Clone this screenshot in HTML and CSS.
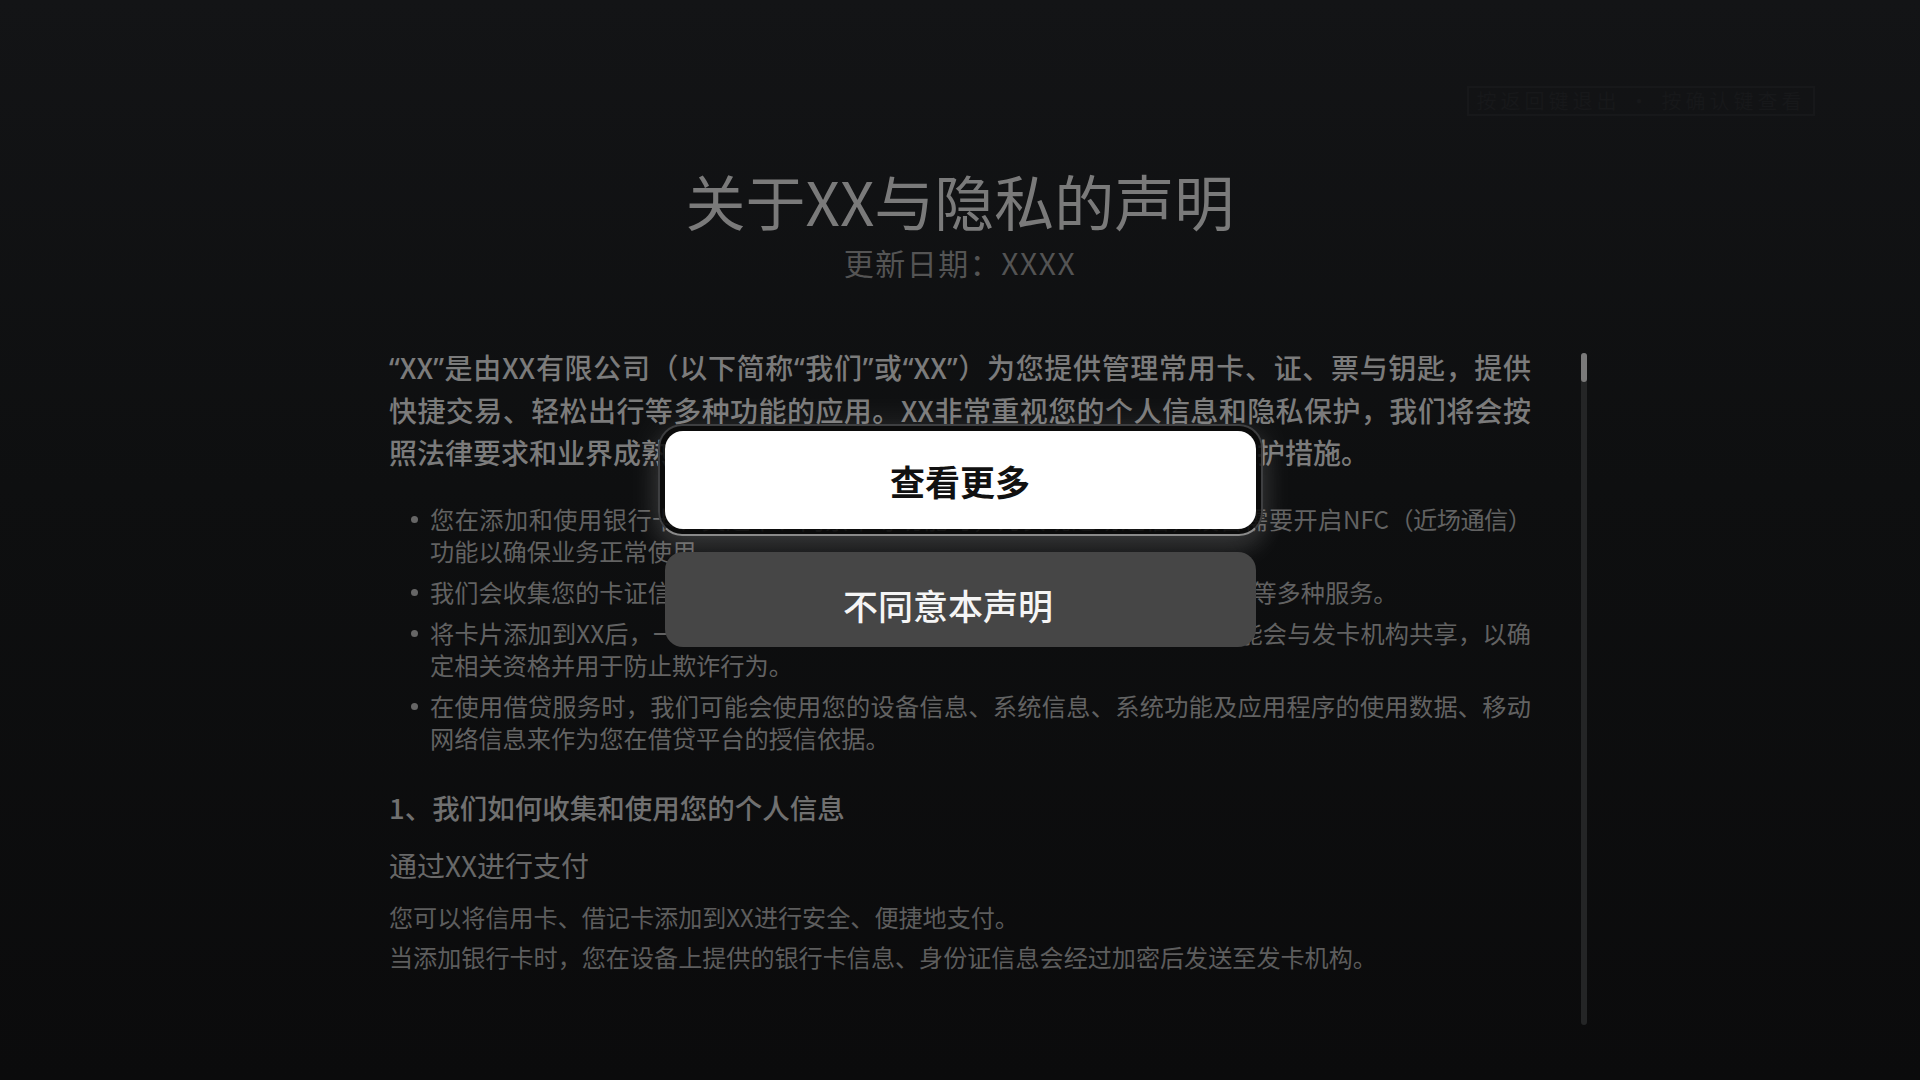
FILE: index.html
```html
<!DOCTYPE html>
<html lang="zh-CN">
<head>
<meta charset="utf-8">
<title>关于XX与隐私的声明</title>
<link rel="stylesheet" href="styles.css">
</head>
<body>
<div class="page">
  <div class="top">
    <div class="hint">按返回键退出 · 按确认键查看</div>
  </div>
  <h1 class="title">关于XX与隐私的声明</h1>
  <div class="date">更新日期：XXXX</div>

  <div class="content">
    <div class="text">
      <p class="lead">
        <span class="line"><span class="q">“</span>XX<span class="q">”</span>是由XX有限公司（以下简称<span class="q">“</span>我们<span class="q">”</span>或<span class="q">“</span>XX<span class="q">”</span>）为您提供管理常用卡、证、票与钥匙，提供</span>
        <span class="line">快捷交易、轻松出行等多种功能的应用。XX非常重视您的个人信息和隐私保护，我们将会按</span>
        <span class="last">照法律要求和业界成熟的安全标准，为您的个人信息采取相应的安全保护措施。</span>
      </p>
      <ul class="bullets">
        <li>
          <span class="line">您在添加和使用银行卡、交通卡、门禁卡等功能时，为实现近场通信，设备需要开启NFC<span class="paren">（近场通信）</span></span>
          <span class="last">功能以确保业务正常使用。</span>
        </li>
        <li><span class="last">我们会收集您的卡证信息，以用于为您提供刷卡、乘车出行、开门、身份验证等多种服务。</span></li>
        <li>
          <span class="line">将卡片添加到XX后，一些与卡片相关信息（如卡号、有效期）及设备信息可能会与发卡机构共享，以确</span>
          <span class="last">定相关资格并用于防止欺诈行为。</span>
        </li>
        <li>
          <span class="line">在使用借贷服务时，我们可能会使用您的设备信息、系统信息、系统功能及应用程序的使用数据、移动</span>
          <span class="last">网络信息来作为您在借贷平台的授信依据。</span>
        </li>
      </ul>
      <h2 class="section">1、我们如何收集和使用您的个人信息</h2>
      <h3 class="sub">通过XX进行支付</h3>
      <p class="body">您可以将信用卡、借记卡添加到XX进行安全、便捷地支付。</p>
      <p class="body">当添加银行卡时，您在设备上提供的银行卡信息、身份证信息会经过加密后发送至发卡机构。</p>
    </div>
    <div class="scrollbar"><div class="thumb"></div></div>
  </div>

  <div class="dialog">
    <div class="focus-ring">
      <button class="btn btn-primary">查看更多</button>
    </div>
    <button class="btn btn-secondary">不同意本声明</button>
  </div>
</div>
</body>
</html>
```

FILE: styles.css
```css
* { box-sizing: border-box; }

html, body {
  margin: 0;
  padding: 0;
  width: 1920px;
  height: 1080px;
  overflow: hidden;
  background: #0e0f10;
}

.page {
  position: relative;
  width: 1920px;
  height: 1080px;
  display: flex;
  flex-direction: column;
  background: linear-gradient(180deg, #131416 0%, #0e0f10 45%, #0b0b0c 100%);
  font-family: "Noto Sans CJK SC", "Noto Sans", sans-serif;
  overflow: hidden;
}

.top {
  display: flex;
  justify-content: flex-end;
  padding: 86px 105px 0 0;
}

.hint {
  width: 348px;
  height: 30px;
  border: 2px solid #17181a;
  color: #17181a;
  font-size: 20px;
  line-height: 26px;
  text-align: center;
  letter-spacing: 4px;
}

.title {
  margin: 48px 0 0;
  text-align: center;
  font-size: 60px;
  line-height: 72px;
  font-weight: 400;
  color: #7a7a7a;
}

.date {
  margin-top: 6px;
  text-align: center;
  font-size: 30px;
  line-height: 40px;
  letter-spacing: 1.5px;
  color: #545454;
}

.content {
  margin-top: 64px;
  padding-left: 389px;
  display: flex;
  gap: 50px;
}

.text {
  width: 1142px;
}

.line {
  display: block;
  white-space: nowrap;
  text-align: justify;
  text-align-last: justify;
}

.last {
  display: block;
  white-space: nowrap;
}

.q {
  font-family: "Noto Sans", "DejaVu Sans", sans-serif;
}

.paren {
  letter-spacing: -1px;
}

.lead {
  margin: 0;
  font-size: 28px;
  line-height: 42px;
  font-weight: 500;
  color: #7b7b7b;
}

.bullets {
  list-style: none;
  margin: 30px 0 0;
  padding: 0 0 0 41px;
  font-size: 24.2px;
  line-height: 32px;
  color: #626262;
}

.bullets li {
  position: relative;
  margin-bottom: 9px;
}

.bullets li::before {
  content: "";
  position: absolute;
  left: -19px;
  top: 13px;
  width: 7px;
  height: 7px;
  border-radius: 50%;
  background: #666666;
}

.section {
  margin: 35px 0 0;
  font-size: 27.5px;
  line-height: 36px;
  font-weight: 500;
  color: #707070;
}

.sub {
  margin: 22px 0 0;
  font-size: 28px;
  line-height: 36px;
  font-weight: 400;
  color: #686868;
}

.sub + .body {
  margin-top: 14px;
}

.body {
  margin: 0;
  font-size: 24.1px;
  line-height: 40px;
  color: #5d5d5d;
}

.scrollbar {
  margin-top: 7px;
  width: 6px;
  height: 672px;
  border-radius: 3px;
  background: #242526;
}

.thumb {
  width: 6px;
  height: 29px;
  border-radius: 3px;
  background: #7a7a7a;
}

.dialog {
  position: absolute;
  left: 0;
  top: 0;
  width: 1920px;
  padding-top: 424px;
  display: flex;
  flex-direction: column;
  align-items: center;
  gap: 16px;
}

.focus-ring {
  padding: 5px;
  border: 2px solid #3e3f41;
  border-bottom-color: #8a8a8a;
  border-radius: 24px;
  background: rgba(10, 10, 10, 0.85);
  box-shadow: 0 0 36px rgba(255, 255, 255, 0.10), 0 14px 26px rgba(255, 255, 255, 0.12);
}

.btn {
  display: flex;
  align-items: center;
  justify-content: center;
  width: 591px;
  border: none;
  border-radius: 18px;
  font-family: "Noto Sans CJK SC", "Noto Sans", sans-serif;
  padding: 0;
}

.btn-primary {
  height: 98px;
  background: #ffffff;
  color: #111111;
  font-size: 35px;
  font-weight: 700;
}

.btn-secondary {
  height: 95px;
  padding: 10px 24px 0 0;
  background: #464646;
  color: #f5f5f5;
  font-size: 35px;
  font-weight: 500;
}
```
